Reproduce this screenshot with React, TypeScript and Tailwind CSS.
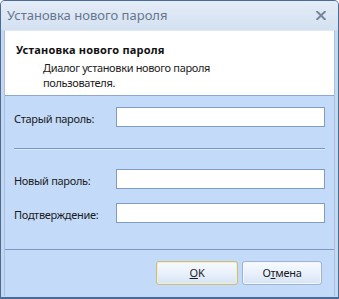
import React from "react";

const font = { fontFamily: '"Noto Sans", "DejaVu Sans", sans-serif' };

function Field({ label }: { label: string }) {
  return (
    <div className="flex items-center h-[20px]">
      <div className="w-[102px] text-[11px] tracking-[-0.3px] text-[#1b1b1b] leading-none pt-[2px]">{label}</div>
      <div className="w-[209px] h-[20px] bg-white border border-[#7f9cc3]" />
    </div>
  );
}

export default function App() {
  return (
    <div className="w-[339px] h-[299px] overflow-hidden bg-white" style={font}>
      <div className="w-[339px] h-[299px] flex flex-col bg-[#c6d8f0] border border-[#4a6b98] border-b-[2px] rounded-t-[5px] overflow-hidden">
        {/* title bar */}
        <div className="h-[29px] shrink-0 flex items-center justify-between pl-[6px] pr-[12px] bg-gradient-to-b from-[#e4ecf7] to-[#d4e1f2]">
          <span className="text-[13px] text-[#66768e] leading-none">Установка нового пароля</span>
          <svg width="10" height="9" viewBox="0 0 10 9">
            <path d="M1.2 0.8 L8.8 8.2 M8.8 0.8 L1.2 8.2" stroke="#75859c" strokeWidth="2" strokeLinecap="square" />
          </svg>
        </div>
        {/* client */}
        <div className="flex-1 flex flex-col px-[3px] pb-[1px]">
          <div className="flex-1 flex flex-col border-x border-t border-[#a9c0e2] border-t-[#e0eaf7]">
            {/* header */}
            <div className="h-[65px] shrink-0 bg-white border-b border-[#8ea9d1] pt-[12px] pl-[11px]">
              <div className="text-[11px] font-bold tracking-[0.2px] text-[#111] leading-[14px]">Установка нового пароля</div>
              <div className="pl-[27px] pt-[3px] text-[11px] tracking-[-0.35px] text-[#1b1b1b] leading-[15px]">
                <div>Диалог установки нового пароля</div>
                <div>пользователя.</div>
              </div>
            </div>
            {/* body */}
            <div className="h-[153px] shrink-0 bg-[#c3daf9] px-[9px] pt-[11px] flex flex-col">
              <Field label="Старый пароль:" />
              <div className="mt-[21px] h-[2px] border-t border-[#7d99c2] border-b border-b-[#dbe8fb]" />
              <div className="mt-[19px]"><Field label="Новый пароль:" /></div>
              <div className="mt-[14px]"><Field label="Подтверждение:" /></div>
            </div>
            {/* footer */}
            <div className="flex-1 bg-[#c3daf9] border-t border-[#7d99c2] flex justify-end items-start pt-[11px] pr-[12px] gap-[4px]">
              <button className="w-[82px] h-[24px] rounded-[3px] border border-[#c9bd83] bg-gradient-to-b from-[#f7faff] via-[#e9f1fb] to-[#d6e4f6] text-[11px] tracking-[-0.3px] text-[#1b1b1b] shadow-[inset_0_0_0_1px_#f5eec6]">
                <span className="underline">O</span>K
              </button>
              <button className="w-[80px] h-[24px] rounded-[3px] border border-[#9fb4d3] bg-gradient-to-b from-[#f7faff] via-[#e9f1fb] to-[#d6e4f6] text-[11px] tracking-[-0.3px] text-[#1b1b1b] shadow-[inset_0_0_0_1px_#f4f8fe]">
                О<span className="underline">т</span>мена
              </button>
            </div>
          </div>
        </div>
      </div>
    </div>
  );
}
